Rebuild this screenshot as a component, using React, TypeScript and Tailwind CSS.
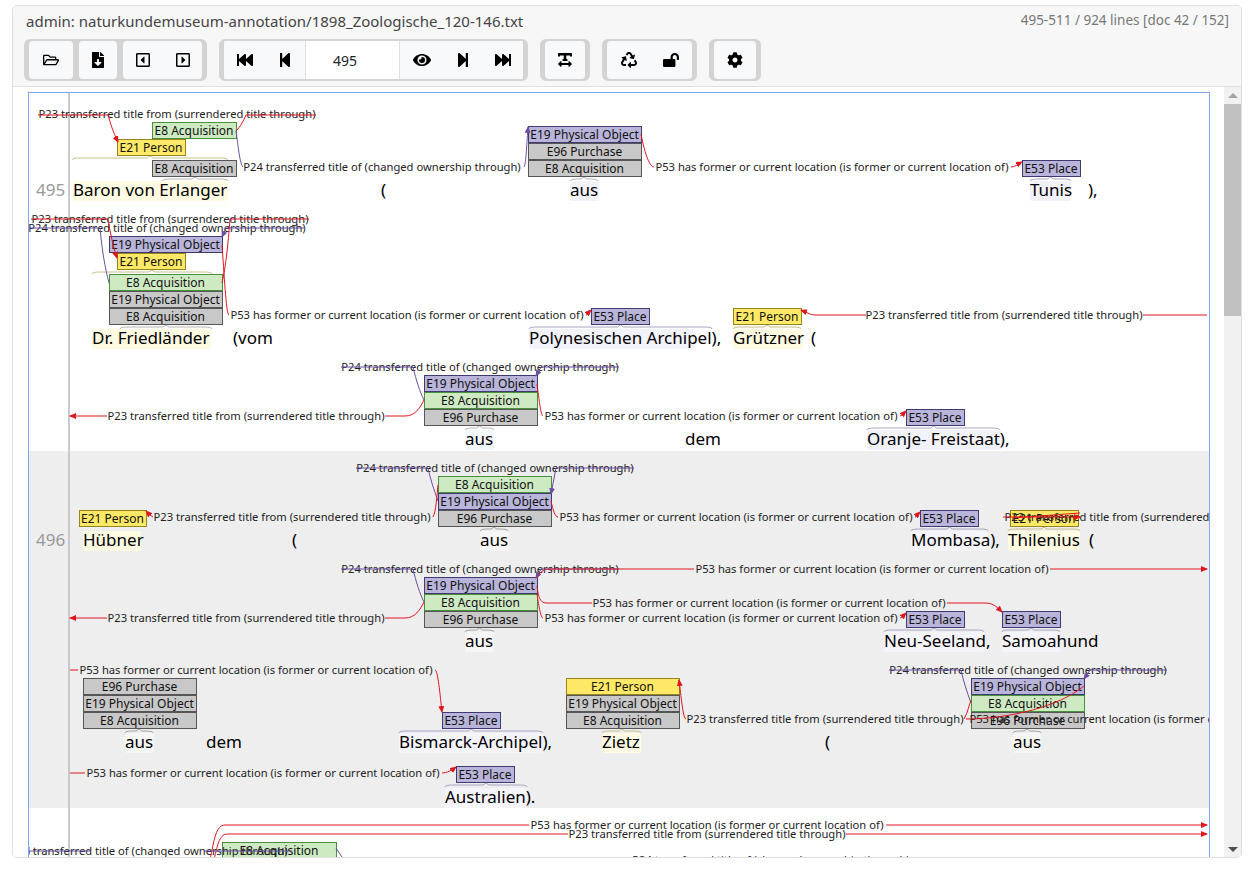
import type { ReactNode } from 'react'
import {
  FaCog,
  FaEye,
  FaFastBackward,
  FaFastForward,
  FaFileDownload,
  FaLockOpen,
  FaRecycle,
  FaRegCaretSquareLeft,
  FaRegCaretSquareRight,
  FaRegFolderOpen,
  FaStepBackward,
  FaStepForward,
  FaTextWidth,
} from 'react-icons/fa'

const RED = '#e0161e'
const PURPLE = '#6a4fa3'

const FILL = {
  green: ['#cdeac3', '#4a8f3c'],
  gray: ['#c8c8c8', '#565656'],
  purple: ['#b9b5da', '#3f3a72'],
  yellow: ['#ffe966', '#95851c'],
} as const

type Tone = keyof typeof FILL

// x, top, width, tone, text
const BOXES: [number, number, number, Tone, string][] = [
  [152, 122, 84, 'green', 'E8 Acquisition'],
  [117, 139, 68, 'yellow', 'E21 Person'],
  [152, 160, 84, 'gray', 'E8 Acquisition'],
  [528, 126, 113, 'purple', 'E19 Physical Object'],
  [528, 143, 113, 'gray', 'E96 Purchase'],
  [528, 160, 113, 'gray', 'E8 Acquisition'],
  [1022, 160, 58, 'purple', 'E53 Place'],

  [109, 236, 113, 'purple', 'E19 Physical Object'],
  [117, 253, 68, 'yellow', 'E21 Person'],
  [109, 274, 113, 'green', 'E8 Acquisition'],
  [109, 291, 113, 'gray', 'E19 Physical Object'],
  [109, 308, 113, 'gray', 'E8 Acquisition'],
  [591, 308, 58, 'purple', 'E53 Place'],
  [733, 308, 68, 'yellow', 'E21 Person'],

  [424, 375, 113, 'purple', 'E19 Physical Object'],
  [424, 392, 113, 'green', 'E8 Acquisition'],
  [424, 409, 113, 'gray', 'E96 Purchase'],
  [906, 409, 58, 'purple', 'E53 Place'],

  [438, 476, 113, 'green', 'E8 Acquisition'],
  [438, 493, 113, 'purple', 'E19 Physical Object'],
  [438, 510, 113, 'gray', 'E96 Purchase'],
  [79, 510, 67, 'yellow', 'E21 Person'],
  [920, 510, 58, 'purple', 'E53 Place'],
  [1010, 510, 68, 'yellow', 'E21 Person'],

  [424, 577, 113, 'purple', 'E19 Physical Object'],
  [424, 594, 113, 'green', 'E8 Acquisition'],
  [424, 611, 113, 'gray', 'E96 Purchase'],
  [906, 611, 58, 'purple', 'E53 Place'],
  [1002, 611, 58, 'purple', 'E53 Place'],

  [83, 678, 113, 'gray', 'E96 Purchase'],
  [83, 695, 113, 'gray', 'E19 Physical Object'],
  [83, 712, 113, 'gray', 'E8 Acquisition'],
  [442, 712, 58, 'purple', 'E53 Place'],
  [566, 678, 113, 'yellow', 'E21 Person'],
  [566, 695, 113, 'gray', 'E19 Physical Object'],
  [566, 712, 113, 'gray', 'E8 Acquisition'],
  [971, 678, 113, 'purple', 'E19 Physical Object'],
  [971, 695, 113, 'green', 'E8 Acquisition'],
  [971, 712, 113, 'gray', 'E96 Purchase'],

  [456, 766, 58, 'purple', 'E53 Place'],

  [222, 842, 114, 'green', 'E8 Acquisition'],
]

const P23 = 'P23 transferred title from (surrendered title through)'
const P24 = 'P24 transferred title of (changed ownership through)'
const P53 = 'P53 has former or current location (is former or current location of)'

// centre x, middle y, text
const LABELS: [number, number, string][] = [
  [177, 114, P23],
  [382, 167, P24],
  [832, 167, P53],
  [170, 219, P23],
  [167, 228, P24],
  [407, 315, P53],
  [1004, 315, P23],
  [480, 367, P24],
  [246, 416, P23],
  [721, 416, P53],
  [495, 468, P24],
  [292, 517, P23],
  [736, 517, P53],
  [1143, 517, P23],
  [480, 569, P24],
  [872, 569, P53],
  [769, 603, P53],
  [721, 618, P53],
  [246, 618, P23],
  [256, 670, P53],
  [825, 719, P23],
  [1028, 670, P24],
  [1146, 719, P53],
  [263, 773, P53],
  [707, 825, P53],
  [707, 834, P23],
  [149, 851, P24],
  [771, 860, P24],
]

// path, colour, arrow at the end
const ARCS: [string, string, boolean][] = [
  ['M38 115 H108 C110 122 113 132 118 142', RED, true],
  ['M316 115 H246 C243 122 240 127 236 131', RED, false],
  ['M236 131 C238 145 240 165 243 167', PURPLE, false],
  ['M524 167 C526 165 527 140 528 127', PURPLE, true],
  ['M641 134 C644 150 649 167 654 167', RED, false],
  ['M1011 167 C1015 167 1018 164 1022 162', RED, true],

  ['M31 219 H108 C110 232 113 246 117 258', RED, true],
  ['M309 219 H230 C228 245 226 265 222 283', RED, false],
  ['M28 228 H100 C102 250 105 268 109 283', PURPLE, false],
  ['M305 228 H226 L222 237', PURPLE, true],
  ['M222 245 C224 270 226 315 229 315', RED, false],
  ['M586 315 C588 315 589 312 591 310', RED, true],
  ['M866 315 H815 C810 315 806 312 801 310', RED, true],
  ['M1143 315 H1207', RED, false],

  ['M341 367 H413 C416 380 420 392 424 400', PURPLE, false],
  ['M619 367 H541 L536 376', PURPLE, true],
  ['M385 416 H405 C415 416 420 408 424 400', RED, false],
  ['M107 416 H70', RED, true],
  ['M537 384 C539 400 541 416 543 416', RED, false],
  ['M900 416 C902 416 904 413 906 411', RED, true],

  ['M356 468 H428 C430 478 434 490 438 501', PURPLE, false],
  ['M634 468 H556 L551 494', PURPLE, true],
  ['M433 517 C436 512 437 495 438 485', RED, false],
  ['M153 517 C151 516 149 514 146 511', RED, true],
  ['M551 501 C553 510 555 517 558 517', RED, false],
  ['M915 517 C917 517 918 514 920 512', RED, true],
  ['M1003 517 H1080', RED, true],
  ['M1080 513 L1012 518', RED, false],

  ['M341 569 H413 C416 582 420 594 424 602', PURPLE, false],
  ['M619 569 H541 L536 578', PURPLE, true],
  ['M537 578 C540 570 546 569 552 569 H694', RED, false],
  ['M1050 569 H1207', RED, true],
  ['M537 586 C538 596 540 603 546 603 H592', RED, false],
  ['M947 603 H985 C994 603 998 608 1002 612', RED, true],
  ['M537 594 C539 608 541 618 543 618', RED, false],
  ['M900 618 C902 618 904 615 906 613', RED, true],
  ['M385 618 H405 C415 618 420 610 424 602', RED, false],
  ['M107 618 H70', RED, true],

  ['M70 670 H78', RED, false],
  ['M435 670 C438 670 440 695 442 712', RED, true],
  ['M686 719 C683 719 681 695 679 680', RED, true],
  ['M889 670 H961 C963 680 967 692 971 703', PURPLE, false],
  ['M1167 670 H1090 L1084 679', PURPLE, true],
  ['M964 719 C968 712 969 705 971 700', RED, false],
  ['M1084 686 C1060 706 1010 719 966 719', RED, false],

  ['M70 773 H85', RED, false],
  ['M442 773 C447 773 452 770 456 767', RED, true],

  ['M210 860 C214 840 216 825 225 825 H529', RED, false],
  ['M886 825 H1207', RED, true],
  ['M214 860 C218 842 220 834 228 834 H568', RED, false],
  ['M846 834 H1207', RED, true],
  ['M28 851 H34 M29 847 V855', PURPLE, false],
  ['M34 851 H90 M204 851 H292', PURPLE, false],
  ['M336 848 L344 860', PURPLE, false],
]

// text, start x, baseline, highlight colour, highlight width
const WORDS: [string, number, number, string?, number?][] = [
  ['Baron von Erlanger', 73, 196, '#fffbe3', 155],
  ['(', 381, 196],
  ['aus', 570, 196, '#f2f2fa', 29],
  ['Tunis', 1030, 196, '#f2f1fa', 41],
  ['),', 1088, 196],
  ['Dr. Friedländer', 92, 344, '#fffbe3', 119],
  ['(vom', 233, 344],
  ['Polynesischen Archipel),', 529, 344, '#f2f2fa', 166],
  ['Grützner', 733, 344, '#fffbe3', 70],
  ['(', 811, 344],
  ['aus', 465, 445, '#f4f7fa', 29],
  ['dem', 685, 445],
  ['Oranje- Freistaat),', 867, 445, '#f2f2fa', 135],
  ['Hübner', 83, 546, '#fffbe3', 58],
  ['(', 292, 546],
  ['aus', 480, 546, '#f6f6f6', 29],
  ['Mombasa),', 911, 546, '#f5f4fb', 77],
  ['Thilenius', 1008, 546, '#fffbe3', 72],
  ['(', 1089, 546],
  ['aus', 465, 647, '#f6f6f6', 29],
  ['Neu-Seeland,', 884, 647, '#f5f4fb', 100],
  ['Samoahund', 1002, 647, '#f5f4fb', 58],
  ['aus', 125, 748, '#f6f6f6', 29],
  ['dem', 206, 748],
  ['Bismarck-Archipel),', 399, 748, '#f5f4fb', 144],
  ['Zietz', 602, 748, '#fffbe3', 39],
  ['(', 825, 748],
  ['aus', 1013, 748, '#f6f6f6', 28],
  ['Australien).', 445, 803, '#f5f4fb', 82],
]

// from, to, y, colour
const BRACES: [number, number, number, string][] = [
  [72, 228, 158, '#c9c08a'],
  [162, 228, 179, '#b5b5b5'],
  [570, 598, 179, '#b5b5b5'],
  [1030, 1071, 179, '#a9a6c4'],
  [92, 212, 272, '#c9c08a'],
  [120, 212, 327, '#b5b5b5'],
  [529, 712, 327, '#a9a6c4'],
  [733, 801, 327, '#c9c08a'],
  [465, 494, 428, '#b5b5b5'],
  [867, 1000, 428, '#a9a6c4'],
  [480, 508, 529, '#a5a5a5'],
  [911, 988, 529, '#a9a6c4'],
  [1008, 1080, 529, '#c9c08a'],
  [465, 494, 630, '#a5a5a5'],
  [884, 984, 630, '#a9a6c4'],
  [1002, 1060, 630, '#a9a6c4'],
  [125, 153, 731, '#a5a5a5'],
  [399, 543, 731, '#a9a6c4'],
  [602, 641, 731, '#c9c08a'],
  [1013, 1041, 731, '#a5a5a5'],
  [445, 527, 785, '#a9a6c4'],
]

function Annotations() {
  return (
    <svg className="absolute left-0 top-0 h-[775px] w-[1182px]" viewBox="29 93 1182 775" fontFamily="'Noto Sans', sans-serif">
      <defs>
        <marker id="red-head" markerWidth="7" markerHeight="6" refX="6" refY="3" orient="auto">
          <path d="M0 0 L7 3 L0 6 Z" fill={RED} />
        </marker>
        <marker id="purple-head" markerWidth="7" markerHeight="6" refX="6" refY="3" orient="auto">
          <path d="M0 0 L7 3 L0 6 Z" fill={PURPLE} />
        </marker>
      </defs>

      <rect x="68" y="92" width="2" height="775" fill="#c9c9c9" />
      <text x="36" y="196" fontSize="17" fill="#999999">495</text>
      <text x="36" y="546" fontSize="17" fill="#999999">496</text>

      {WORDS.map(([text, x, y, bg, w]) => (
        <g key={`${text}-${x}-${y}`}>
          {bg && <rect x={x} y={y - 15} width={w} height={20} rx="2" fill={bg} />}
          <text x={x} y={y} fontSize="17" fill="#000000">{text}</text>
        </g>
      ))}

      {BRACES.map(([from, to, y, color]) => {
        const mid = (from + to) / 2
        return (
          <path
            key={`${from}-${y}`}
            d={`M${from} ${y + 2} Q${from} ${y} ${from + 8} ${y} H${mid - 3} L${mid} ${y - 2} L${mid + 3} ${y} H${to - 8} Q${to} ${y} ${to} ${y + 2}`}
            fill="none"
            stroke={color}
            strokeWidth="1"
          />
        )
      })}

      {BOXES.map(([x, y, w, tone, text]) => (
        <g key={`${x}-${y}`}>
          <rect x={x + 0.5} y={y + 0.5} width={w} height={16} fill={FILL[tone][0]} stroke={FILL[tone][1]} />
          <text x={x + w / 2} y={y + 13} fontSize="12" textAnchor="middle" fill="#111111">{text}</text>
        </g>
      ))}

      {LABELS.map(([x, y, text]) => (
        <text key={`${x}-${y}`} x={x} y={y + 4} fontSize="11.2" textAnchor="middle" fill="#222222">{text}</text>
      ))}

      {ARCS.map(([d, color, head], i) => (
        <path
          key={i}
          d={d}
          fill="none"
          stroke={color}
          strokeWidth="1"
          markerEnd={head ? `url(#${color === RED ? 'red' : 'purple'}-head)` : undefined}
        />
      ))}
    </svg>
  )
}

function ToolGroup({ children }: { children: ReactNode }) {
  return (
    <div className="flex h-[42px] gap-[6px] rounded-[6px] border-y-2 border-x-[5px] border-[#d3d3d3] bg-[#d3d3d3]">
      {children}
    </div>
  )
}

function ToolButton({ children, w = 'w-11' }: { children: ReactNode; w?: string }) {
  return (
    <div className={`flex h-full items-center justify-center gap-[24px] rounded-[4px] bg-[#f8f9fa] text-[16px] text-black ${w}`}>
      {children}
    </div>
  )
}

function Toolbar() {
  return (
    <div className="mt-[8px] flex gap-3">
      <ToolGroup>
        <ToolButton><FaRegFolderOpen /></ToolButton>
        <ToolButton w="w-[38px]"><FaFileDownload /></ToolButton>
        <ToolButton w="w-[79px]"><FaRegCaretSquareLeft /><FaRegCaretSquareRight /></ToolButton>
      </ToolGroup>
      <div className="flex h-[42px] w-[309px] overflow-hidden rounded-[6px] border-y-2 border-x-[5px] border-[#d3d3d3] bg-[#f8f9fa] text-[16px]">
        <div className="flex w-[81px] items-center justify-center gap-[24px]"><FaFastBackward /><FaStepBackward /></div>
        <div className="flex w-[95px] items-center justify-center border-x border-[#dee2e6] bg-white pr-[15px] text-[14px] text-[#212529]">495</div>
        <div className="flex flex-1 items-center justify-center gap-[24px]"><FaEye className="text-[18px]" /><FaStepForward /><FaFastForward /></div>
      </div>
      <ToolGroup>
        <ToolButton w="w-10"><FaTextWidth /></ToolButton>
      </ToolGroup>
      <ToolGroup>
        <ToolButton w="w-[85px]"><FaRecycle className="mr-[2px]" /><FaLockOpen /></ToolButton>
      </ToolGroup>
      <ToolGroup>
        <ToolButton w="w-[42px]"><FaCog /></ToolButton>
      </ToolGroup>
    </div>
  )
}

export default function App() {
  return (
    <div className="min-h-[871px] bg-white pt-[5px] pl-3 font-['Noto_Sans',sans-serif]">
      <div className="h-[853px] w-[1230px] overflow-hidden rounded-[5px] border border-[#dfdfdf]">
        <div className="h-[81px] border-b border-[#dfdfdf] bg-[#f7f7f7] pl-[11px] pr-3 pt-[5px]">
          <div className="flex items-start justify-between">
            <span className="pl-[2px] text-[15px] leading-[20px] text-[#444444]">
              admin: naturkundemuseum-annotation/1898_Zoologische_120-146.txt
            </span>
            <span className="text-[13.5px] leading-[18px] text-[#777777]">495-511 / 924 lines [doc 42 / 152]</span>
          </div>
          <Toolbar />
        </div>

        <div className="flex h-[771px] bg-white">
          <div className="w-[1211px] pl-[15px] pt-[5px]">
            <div className="relative h-[770px] w-[1182px] overflow-hidden border-l border-r border-t border-[#7fa6f4]">
              <div className="h-[358px] bg-white" />
              <div className="h-[357px] bg-[#eeeeee]" />
              <Annotations />
            </div>
          </div>
          <div className="flex w-[17px] flex-col items-center bg-[#f1f1f1]">
            <div className="mt-[6px] h-0 w-0 border-x-[5px] border-b-[5px] border-x-transparent border-b-[#a3a3a3]" />
            <div className="mt-[6px] h-[212px] w-full bg-[#c1c1c1]" />
            <div className="mt-auto mb-[6px] h-0 w-0 border-x-[5px] border-t-[5px] border-x-transparent border-t-[#505050]" />
          </div>
        </div>
      </div>
    </div>
  )
}
